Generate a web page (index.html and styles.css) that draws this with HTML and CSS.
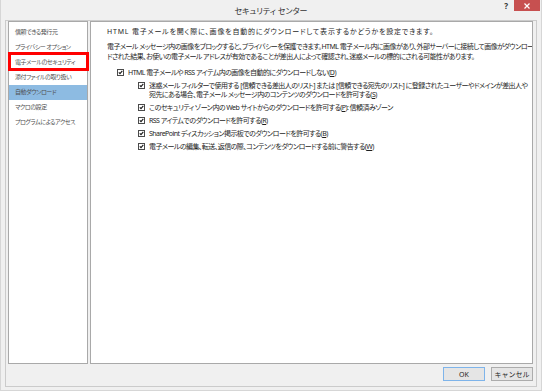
FILE: index.html
```html
<!DOCTYPE html>
<html>
<head>
  <title>セキュリティ センター</title>
  <meta charset="UTF-8"/>
  <link rel="stylesheet" href="styles.css">
</head>

<body>
<div class="window">
  <!-- タイトルバー -->
  <div class="titlebar">
    <span></span>
    <span class="title">セキュリティ センター</span>
    <div class="controls">
      <span class="help">?</span>
      <span class="close">
        <svg width="6" height="6" viewBox="0 0 6 6"><path d="M0.5 0.5L5.5 5.5M5.5 0.5L0.5 5.5" stroke="#fff" stroke-width="1.2"/></svg>
      </span>
    </div>
  </div>

  <div class="client">
    <div class="panes">
      <ul class="nav">
        <li>信頼できる発行元</li>
        <li>プライバシー オプション</li>
        <li class="marked">電子メールのセキュリティ</li>
        <li>添付ファイルの取り扱い</li>
        <li class="selected">自動ダウンロード</li>
        <li>マクロの設定</li>
        <li>プログラムによるアクセス</li>
      </ul>

      <div class="content">
        <p class="intro">HTML 電子メールを開く際に、画像を自動的にダウンロードして表示するかどうかを設定できます。</p>
        <p class="note">電子メール メッセージ内の画像をブロックすると、プライバシーを保護できます。HTML 電子メール内に画像があり、外部サーバーに接続して画像がダウンロー<br>ドされた結果、お使いの電子メール アドレスが有効であることが差出人によって確認され、迷惑メールの標的にされる可能性があります。</p>

        <div class="option">
          <svg class="check" width="7" height="7" viewBox="0 0 7 7"><rect x="0.5" y="0.5" width="6" height="6" fill="#fff" stroke="#4a4a4a"/><path d="M1.8 3.4L3 4.7L5.3 1.9" fill="none" stroke="#1a1a1a" stroke-width="1.1"/></svg>
          <span>HTML 電子メールや RSS アイテム内の画像を自動的にダウンロードしない(<u>D</u>)</span>
        </div>

        <div class="sub-options">
          <div class="option">
            <svg class="check" width="7" height="7" viewBox="0 0 7 7"><rect x="0.5" y="0.5" width="6" height="6" fill="#fff" stroke="#4a4a4a"/><path d="M1.8 3.4L3 4.7L5.3 1.9" fill="none" stroke="#1a1a1a" stroke-width="1.1"/></svg>
            <span>迷惑メール フィルターで使用する [信頼できる差出人のリスト] または [信頼できる宛先のリスト] に登録されたユーザーやドメインが差出人や<br>宛先にある場合、電子メール メッセージ内のコンテンツのダウンロードを許可する(<u>S</u>)</span>
          </div>
          <div class="option">
            <svg class="check" width="7" height="7" viewBox="0 0 7 7"><rect x="0.5" y="0.5" width="6" height="6" fill="#fff" stroke="#4a4a4a"/><path d="M1.8 3.4L3 4.7L5.3 1.9" fill="none" stroke="#1a1a1a" stroke-width="1.1"/></svg>
            <span>このセキュリティ ゾーン内の Web サイトからのダウンロードを許可する(<u>P</u>): 信頼済みゾーン</span>
          </div>
          <div class="option">
            <svg class="check" width="7" height="7" viewBox="0 0 7 7"><rect x="0.5" y="0.5" width="6" height="6" fill="#fff" stroke="#4a4a4a"/><path d="M1.8 3.4L3 4.7L5.3 1.9" fill="none" stroke="#1a1a1a" stroke-width="1.1"/></svg>
            <span>RSS アイテムでのダウンロードを許可する(<u>R</u>)</span>
          </div>
          <div class="option">
            <svg class="check" width="7" height="7" viewBox="0 0 7 7"><rect x="0.5" y="0.5" width="6" height="6" fill="#fff" stroke="#4a4a4a"/><path d="M1.8 3.4L3 4.7L5.3 1.9" fill="none" stroke="#1a1a1a" stroke-width="1.1"/></svg>
            <span>SharePoint ディスカッション掲示板でのダウンロードを許可する(<u>B</u>)</span>
          </div>
          <div class="option">
            <svg class="check" width="7" height="7" viewBox="0 0 7 7"><rect x="0.5" y="0.5" width="6" height="6" fill="#fff" stroke="#4a4a4a"/><path d="M1.8 3.4L3 4.7L5.3 1.9" fill="none" stroke="#1a1a1a" stroke-width="1.1"/></svg>
            <span>電子メールの編集、転送、返信の際、コンテンツをダウンロードする前に警告する(<u>W</u>)</span>
          </div>
        </div>
      </div>
    </div>

    <!-- ボタン -->
    <div class="footer">
      <button class="btn default">OK</button>
      <button class="btn">キャンセル</button>
    </div>
  </div>
</div>
</body>
</html>
```

FILE: styles.css
```css
* {
  box-sizing: border-box;
}

body {
  margin: 0;
  padding: 0;
  background-color: #f0f0f0;
  font-family: "Noto Sans", "Noto Sans CJK JP", sans-serif;
  font-feature-settings: "palt";
  font-size: 7px;
  color: #1e1e1e;
}

.window {
  width: 542px;
  height: 391px;
  border: 1px solid #d6d6d6;
  border-top: none;
  display: flex;
  flex-direction: column;
  overflow: hidden;
}

/* タイトルバー */
.titlebar {
  height: 20px;
  flex-shrink: 0;
  display: grid;
  grid-template-columns: 1fr auto 1fr;
  align-items: center;
}

.title {
  font-size: 8px;
  color: #333;
  padding-top: 1px;
}

.controls {
  justify-self: end;
  align-self: start;
  display: flex;
  align-items: center;
}

.help {
  font-size: 8px;
  font-weight: bold;
  color: #333;
  margin-right: 6px;
}

.close {
  width: 26px;
  height: 11px;
  margin-right: 1px;
  background-color: #c75050;
  display: flex;
  align-items: center;
  justify-content: center;
}

/* 本体 */
.client {
  flex: 1;
  min-height: 0;
  margin: 0 4px 3px 4px;
  border: 1px solid #cbcbcb;
  padding: 0 3px 0 2px;
  display: flex;
  flex-direction: column;
}

.panes {
  height: 343px;
  flex-shrink: 0;
  display: flex;
  gap: 2px;
}

.nav {
  width: 80px;
  flex-shrink: 0;
  margin: 0;
  padding: 3px 0 0 0;
  list-style: none;
  background-color: #fff;
  border: 1px solid #a9a9a9;
}

.nav li {
  height: 15px;
  line-height: 15px;
  padding-left: 6px;
  font-size: 6px;
  letter-spacing: -0.45px;
  color: #505050;
  white-space: nowrap;
}

.nav li.selected {
  background-color: #8dbbe2;
}

/* 赤枠（注記） */
.nav li.marked {
  position: relative;
}

.nav li.marked::after {
  content: "";
  position: absolute;
  left: -1px;
  right: -2px;
  top: -3px;
  bottom: -1px;
  border: 3px solid #f00;
}

.content {
  flex: 1;
  min-width: 0;
  overflow: hidden;
  background-color: #fff;
  border: 1px solid #a9a9a9;
  padding: 5px 0 0 16px;
  line-height: 9.5px;
  letter-spacing: -0.55px;
  white-space: nowrap;
}

.content p {
  margin: 0;
}

.content .intro {
  margin-bottom: 5.5px;
  letter-spacing: 0.8px;
}

.content .note {
  margin-bottom: 7px;
}

.option {
  display: flex;
  align-items: flex-start;
  gap: 4px;
  margin-left: 10px;
}

.check {
  flex-shrink: 0;
  margin-top: 1.3px;
}

.sub-options {
  margin-top: 3px;
  margin-left: 21px;
  display: flex;
  flex-direction: column;
  gap: 3.5px;
}

.sub-options .option {
  margin-left: 10px;
}

/* フッター */
.footer {
  flex: 1;
  padding-top: 3px;
  display: flex;
  justify-content: flex-end;
  align-items: flex-start;
  gap: 6px;
}

.btn {
  width: 42px;
  height: 14px;
  padding: 0;
  font-family: inherit;
  font-size: 7px;
  color: #222;
  background-color: #e5e5e5;
  border: 1px solid #acacac;
}

.btn.default {
  border-color: #7eb4ea;
}
```
